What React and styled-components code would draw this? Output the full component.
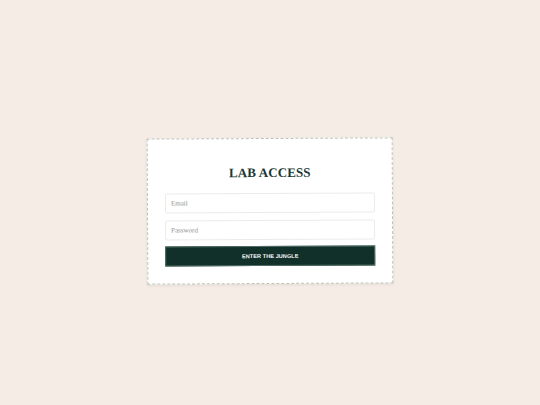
import React from 'react';
import styled, { createGlobalStyle } from 'styled-components';

const GlobalStyle = createGlobalStyle`
  html, body {
    margin: 0;
    padding: 0;
    background: #f5ece6;
  }
  * { box-sizing: border-box; }
`;

const Page = styled.div`
  width: 100%;
  height: 100vh;
  display: flex;
  justify-content: center;
  align-items: flex-start;
  padding-top: 138px;
`;

const Card = styled.form`
  width: 246px;
  background: #ffffff;
  border: 1px dashed #bcc3b5;
  box-shadow: 0 1px 3px rgba(60, 50, 40, 0.1);
  padding: 26px 17px 17px;
  display: flex;
  flex-direction: column;
  transform: rotate(-0.3deg);
`;

const Title = styled.h1`
  margin: 0 0 12px;
  font-family: "Liberation Serif", "Times New Roman", serif;
  font-weight: 700;
  font-size: 13px;
  line-height: 16px;
  text-align: center;
  color: #1b3932;
  letter-spacing: 0.1px;
`;

const Input = styled.input`
  height: 20px;
  width: 100%;
  margin: 0 0 ${(p) => p.gap}px;
  padding: 0 5px;
  border: 1px solid #ebebeb;
  border-radius: 2px;
  background: #ffffff;
  font-family: "Liberation Serif", "Times New Roman", serif;
  font-size: 7px;
  color: #333;
  outline: none;

  &::placeholder {
    color: #8c8c8c;
  }
`;

const Button = styled.button`
  height: 20px;
  width: 100%;
  margin: 0;
  border: 1px solid #4f6d64;
  border-radius: 0;
  background: #12302a;
  color: #ffffff;
  font-family: "Liberation Sans", Arial, sans-serif;
  font-weight: 700;
  font-size: 5.5px;
  letter-spacing: 0.1px;
  text-transform: uppercase;
  cursor: pointer;
`;

const App = () => {
  return (
    <>
      <GlobalStyle />
      <Page>
        <Card onSubmit={(e) => e.preventDefault()}>
          <Title>LAB ACCESS</Title>
          <Input type="email" placeholder="Email" gap={7} />
          <Input type="password" placeholder="Password" gap={6} />
          <Button type="submit">Enter the jungle</Button>
        </Card>
      </Page>
    </>
  );
};

export default App;
